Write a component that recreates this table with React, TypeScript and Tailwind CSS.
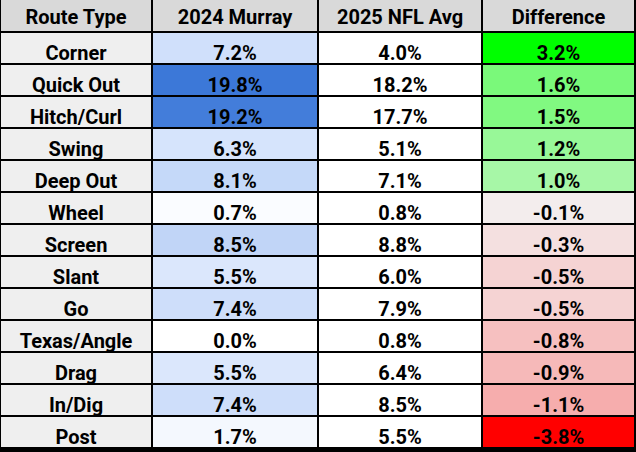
import React from "react";

type Row = { name: string; murray: number; nfl: number; diff: number };

const rows: Row[] = [
  { name: "Corner", murray: 7.2, nfl: 4.0, diff: 3.2 },
  { name: "Quick Out", murray: 19.8, nfl: 18.2, diff: 1.6 },
  { name: "Hitch/Curl", murray: 19.2, nfl: 17.7, diff: 1.5 },
  { name: "Swing", murray: 6.3, nfl: 5.1, diff: 1.2 },
  { name: "Deep Out", murray: 8.1, nfl: 7.1, diff: 1.0 },
  { name: "Wheel", murray: 0.7, nfl: 0.8, diff: -0.1 },
  { name: "Screen", murray: 8.5, nfl: 8.8, diff: -0.3 },
  { name: "Slant", murray: 5.5, nfl: 6.0, diff: -0.5 },
  { name: "Go", murray: 7.4, nfl: 7.9, diff: -0.5 },
  { name: "Texas/Angle", murray: 0.0, nfl: 0.8, diff: -0.8 },
  { name: "Drag", murray: 5.5, nfl: 6.4, diff: -0.9 },
  { name: "In/Dig", murray: 7.4, nfl: 8.5, diff: -1.1 },
  { name: "Post", murray: 1.7, nfl: 5.5, diff: -3.8 },
];

type RGB = [number, number, number];
const mix = (a: RGB, b: RGB, t: number): string => {
  const c = a.map((v, i) => Math.round(v + (b[i] - v) * t));
  return `rgb(${c[0]},${c[1]},${c[2]})`;
};

const WHITE: RGB = [255, 255, 255];
const BMID: RGB = [208, 224, 251];
const BMAX: RGB = [60, 120, 216];
const blue = (v: number) => {
  if (v <= 7.2) return mix(WHITE, BMID, v / 7.2);
  return mix(BMID, BMAX, (v - 7.2) / (19.8 - 7.2));
};

const DMID: RGB = [243, 243, 243];
const diffColor = (v: number) => {
  if (v >= 0) return mix(DMID, [0, 255, 0], v / 3.2);
  return mix(DMID, [255, 0, 0], -v / 3.8);
};

const cell =
  "flex items-end justify-center leading-[20px] text-[20px] font-bold text-black whitespace-nowrap";

export default function App() {
  return (
    <div
      className="w-[636px] h-[452px] bg-black pl-[1px] pr-[2px] pb-[5px] grid grid-cols-[150px_164px_162px_151px] grid-rows-[31px_repeat(13,30px)] gap-[2px]"
      style={{ fontFamily: "Roboto, 'Liberation Sans', sans-serif" }}
    >
      {["Route Type", "2024 Murray", "2025 NFL Avg", "Difference"].map((h) => (
        <div
          key={h}
          className="flex items-end justify-center leading-[23px] text-[20px] font-bold text-black whitespace-nowrap bg-[#d9d9d9] pb-[2px]"
        >
          {h}
        </div>
      ))}
      {rows.map((r) => (
        <React.Fragment key={r.name}>
          <div className={`${cell} bg-[#efefef]`}>{r.name}</div>
          <div className={cell} style={{ backgroundColor: blue(r.murray) }}>
            {r.murray.toFixed(1)}%
          </div>
          <div className={`${cell} bg-white`}>{r.nfl.toFixed(1)}%</div>
          <div className={cell} style={{ backgroundColor: diffColor(r.diff) }}>
            {r.diff.toFixed(1)}%
          </div>
        </React.Fragment>
      ))}
    </div>
  );
}
